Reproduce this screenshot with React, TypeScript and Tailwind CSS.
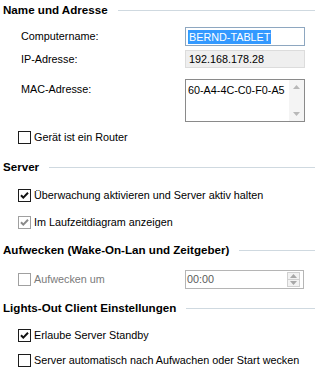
function Header({ title }: { title: string }) {
  return (
    <div className="flex items-center h-[20px] pl-[3px]">
      <span className="font-bold text-[11.6px] text-black whitespace-nowrap">{title}</span>
      <div className="flex-1 h-px bg-[#cfd9e0] ml-[10px]" />
    </div>
  );
}

function Check({ checked, disabled }: { checked?: boolean; disabled?: boolean }) {
  const border = disabled ? "border-[#a0a0a0]" : "border-[#1c1c1c]";
  const stroke = disabled ? "#8a8a8a" : "#111";
  return (
    <span className={`w-[13px] h-[13px] border ${border} bg-white flex items-center justify-center shrink-0`}>
      {checked && (
        <svg width="9" height="9" viewBox="0 0 9 9">
          <path d="M1 4.2 L3.3 6.6 L8 1.8" fill="none" stroke={stroke} strokeWidth="2" />
        </svg>
      )}
    </span>
  );
}

function CheckRow({
  label,
  checked,
  disabled,
  grayText,
  className,
}: {
  label: string;
  checked?: boolean;
  disabled?: boolean;
  grayText?: boolean;
  className?: string;
}) {
  return (
    <div className={`flex items-center h-[16px] pl-[18px] gap-[3px] ${className ?? ""}`}>
      <Check checked={checked} disabled={disabled} />
      <span className={`text-[10.8px] whitespace-nowrap ${grayText ? "text-[#7a7a7a]" : "text-black"}`}>
        {label}
      </span>
    </div>
  );
}

function Arrow({ up, color = "#b8b8b8" }: { up?: boolean; color?: string }) {
  return (
    <svg width="7" height="4" viewBox="0 0 7 4">
      <path d={up ? "M0 4 L3.5 0 L7 4 Z" : "M0 0 L3.5 4 L7 0 Z"} fill={color} />
    </svg>
  );
}

export default function App() {
  return (
    <div
      className="w-[315px] h-[373px] bg-white overflow-hidden text-black"
      style={{ fontFamily: "Tahoma, 'Liberation Sans', sans-serif" }}
    >
      <Header title="Name und Adresse" />

      <div className="flex items-center mt-[7px] h-[19px] pl-[21px]">
        <span className="text-[10.8px] w-[164px]">Computername:</span>
        <div className="w-[120px] h-[19px] border border-[#8ea7c0] bg-white flex items-center pl-[2px]">
          <span className="text-[10.8px] bg-[#3399ff] text-white leading-[14px] px-px">BERND-TABLET</span>
        </div>
      </div>

      <div className="flex items-center mt-[4px] h-[18px] pl-[21px]">
        <span className="text-[10.8px] w-[164px]">IP-Adresse:</span>
        <div className="w-[120px] h-[18px] border border-[#dcdcdc] bg-[#efefef] flex items-center pl-[3px]">
          <span className="text-[10.8px]">192.168.178.28</span>
        </div>
      </div>

      <div className="flex items-start mt-[11px] h-[43px] pl-[21px]">
        <span className="text-[10.8px] w-[164px] pt-[2px]">MAC-Adresse:</span>
        <div className="w-[120px] h-[43px] border border-[#8a8a8a] bg-white flex">
          <span className="flex-1 text-[10.8px] pl-[2px] pt-[2px]">60-A4-4C-C0-F0-A5</span>
          <div className="w-[15px] bg-[#f4f4f4] flex flex-col justify-between items-center py-[5px]">
            <Arrow up />
            <Arrow />
          </div>
        </div>
      </div>

      <CheckRow label="Gerät ist ein Router" className="mt-[7px]" />

      <div className="mt-[12px]">
        <Header title="Server" />
      </div>
      <CheckRow label="Überwachung aktivieren und Server aktiv halten" checked className="mt-[10px]" />
      <CheckRow label="Im Laufzeitdiagram anzeigen" checked disabled className="mt-[11px]" />

      <div className="mt-[10px]">
        <Header title="Aufwecken (Wake-On-Lan und Zeitgeber)" />
      </div>
      <div className="flex items-center mt-[10px] h-[19px]">
        <div className="w-[185px]">
          <CheckRow label="Aufwecken um" disabled grayText />
        </div>
        <div className="w-[119px] h-[19px] border border-[#b5b5b5] bg-white flex items-center">
          <span className="flex-1 text-[10.8px] text-[#5a5a5a] pl-[1px]">00:00</span>
          <div className="w-[13px] h-[15px] mr-[3px] flex flex-col border border-[#d0d0d0] bg-[#f2f2f2]">
            <div className="flex-1 flex items-center justify-center border-b border-[#d0d0d0]">
              <Arrow up color="#a8a8a8" />
            </div>
            <div className="flex-1 flex items-center justify-center">
              <Arrow color="#a8a8a8" />
            </div>
          </div>
        </div>
      </div>

      <div className="mt-[9px]">
        <Header title="Lights-Out Client Einstellungen" />
      </div>
      <CheckRow label="Erlaube Server Standby" checked className="mt-[9px]" />
      <CheckRow label="Server automatisch nach Aufwachen oder Start wecken" className="mt-[9px]" />
    </div>
  );
}
